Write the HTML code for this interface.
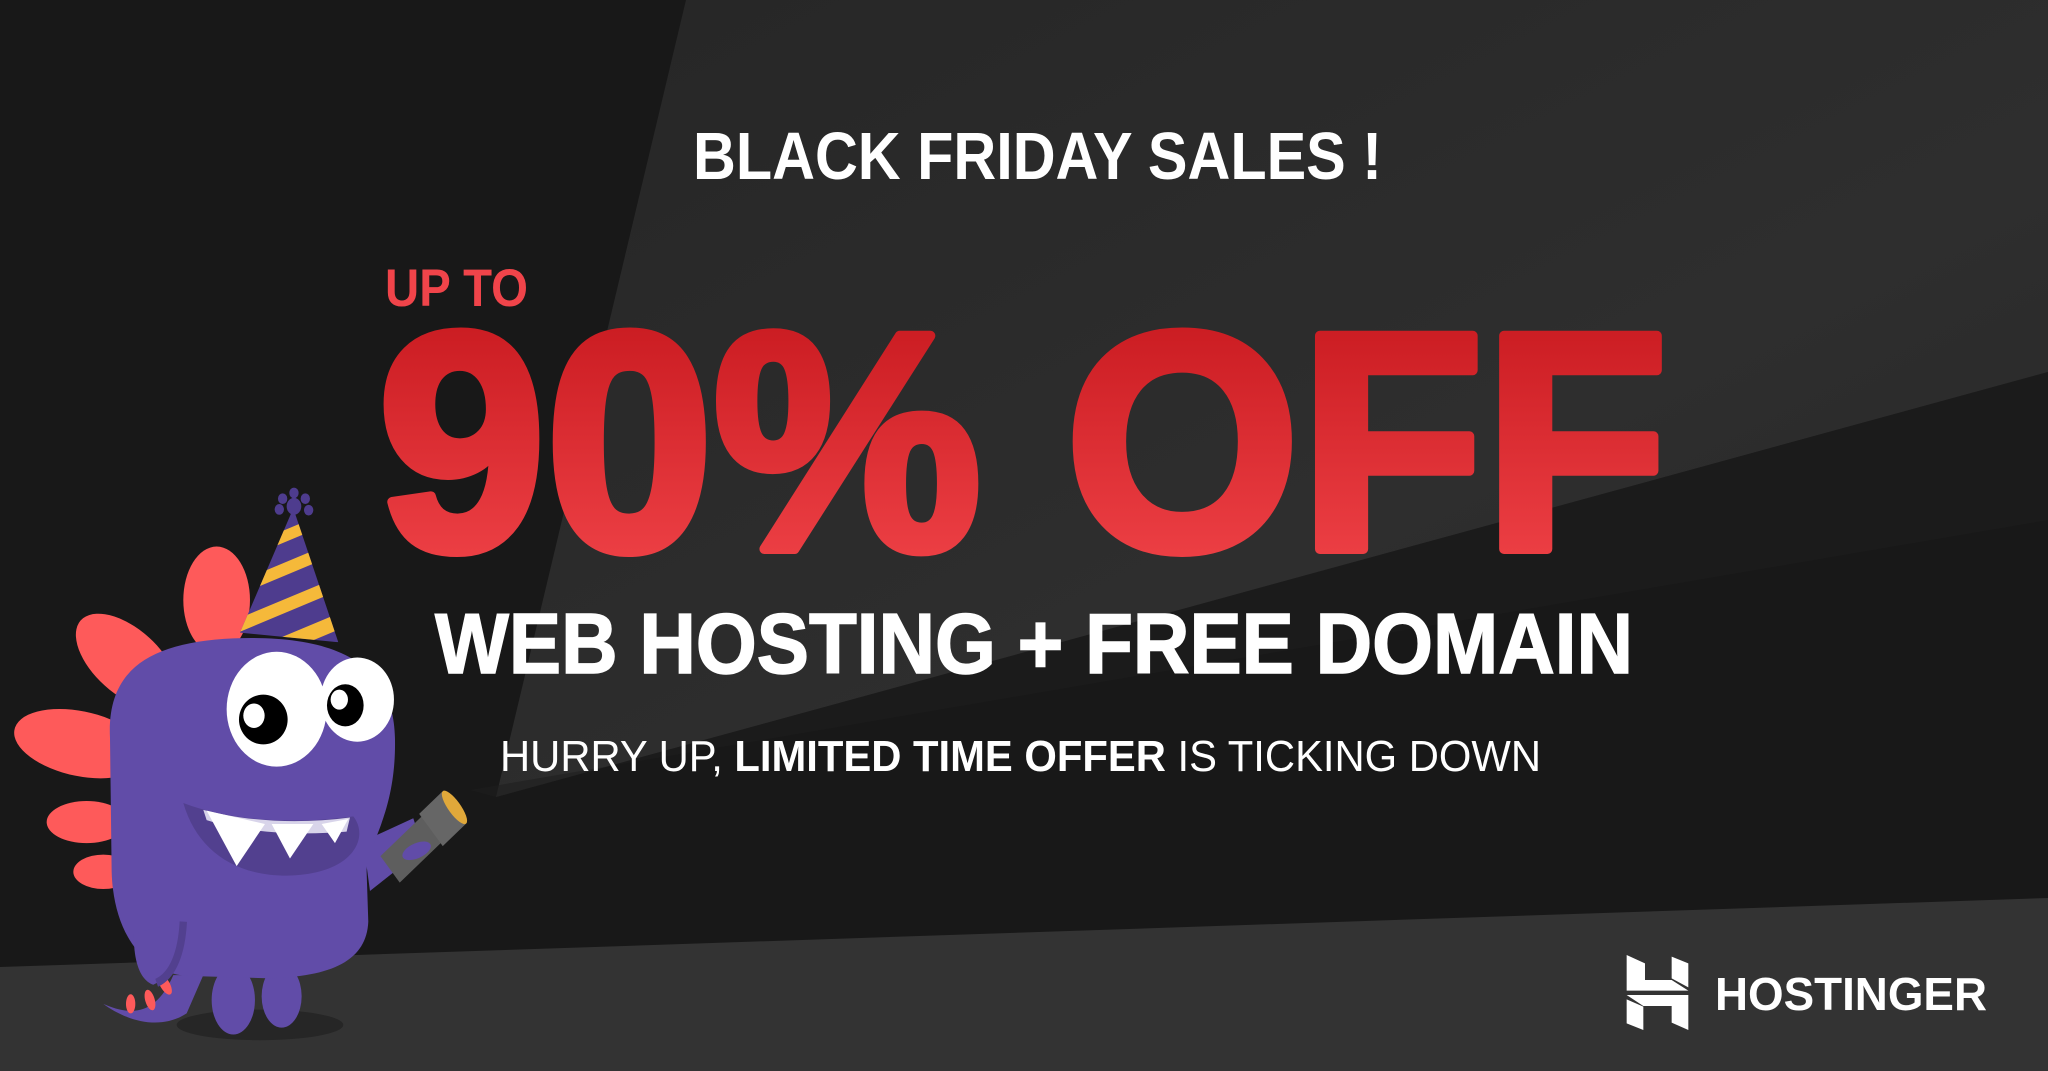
<!DOCTYPE html>
<html><head><meta charset="utf-8"><style>
html,body{margin:0;padding:0;background:#191919;overflow:hidden}
svg{display:block}
text{font-family:"Liberation Sans",sans-serif;font-weight:bold}
</style></head><body>
<svg width="2048" height="1071" viewBox="0 0 2048 1071" xmlns="http://www.w3.org/2000/svg">
<defs>
<linearGradient id="red" x1="0" y1="0" x2="0" y2="1">
<stop offset="0" stop-color="#c3141a"/><stop offset="1" stop-color="#f4474c"/></linearGradient>
<linearGradient id="bg2" x1="0" y1="0" x2="1" y2="1">
<stop offset="0" stop-color="#262626"/><stop offset="0.6" stop-color="#2e2e2e"/><stop offset="1" stop-color="#272727"/></linearGradient>
<clipPath id="hat"><polygon points="720,425 880,100 1015,450"/></clipPath>
</defs>
<rect width="2048" height="1071" fill="#181818"/>
<polygon points="686,0 2048,0 2048,372 496,797" fill="url(#bg2)"/>
<polygon points="496,797 2048,372 2048,520 470,790" fill="#1e1e1e" opacity="0.6"/>
<polygon points="0,967 2048,898 2048,1071 0,1071" fill="#333333"/>

<text x="693" y="179" font-size="67" fill="#fff" textLength="689" lengthAdjust="spacingAndGlyphs">BLACK FRIDAY SALES !</text>
<text x="385" y="306" font-size="53" fill="#f0444a" textLength="143" lengthAdjust="spacingAndGlyphs">UP TO</text>
<text x="378" y="549" font-size="310" fill="url(#red)" stroke="url(#red)" stroke-width="10" stroke-linejoin="round" textLength="1290" lengthAdjust="spacingAndGlyphs">90% OFF</text>
<text x="435" y="673" font-size="85" fill="#fff" stroke="#fff" stroke-width="1.5" textLength="1198" lengthAdjust="spacingAndGlyphs">WEB HOSTING + FREE DOMAIN</text>
<text x="500" y="771" font-size="44" fill="#fff" textLength="1041" lengthAdjust="spacingAndGlyphs"><tspan font-weight="normal">HURRY UP, </tspan>LIMITED TIME OFFER<tspan font-weight="normal"> IS TICKING DOWN</tspan></text>

<g transform="translate(1600,930) scale(0.3333)" fill="#fff">
<polygon points="80,75 135,100 135,150 215,150 265,182 80,182"/>
<polygon points="215,80 265,100 265,172 215,145"/>
<polygon points="80,195 265,195 265,300 215,278 215,228 130,228"/>
<polygon points="80,208 130,230 130,300 80,280"/>
</g>
<text x="1715" y="1010" font-size="46" fill="#fff" textLength="272" lengthAdjust="spacingAndGlyphs">HOSTINGER</text>

<g transform="translate(0,470) scale(0.3333,0.3827)">
<ellipse cx="780" cy="1450" rx="250" ry="40" fill="#262626"/>
<g fill="#fe5a5a">
<ellipse cx="650" cy="340" rx="100" ry="140"/>
<ellipse cx="380" cy="500" rx="175" ry="90" transform="rotate(35 380 500)"/>
<ellipse cx="240" cy="715" rx="200" ry="85" transform="rotate(10 240 715)"/>
<ellipse cx="260" cy="920" rx="120" ry="55"/>
<ellipse cx="310" cy="1050" rx="90" ry="45"/>
</g>
<path d="M310,1395 C380,1440 480,1465 560,1420 L610,1320 L520,1320 C470,1420 400,1430 310,1395 Z" fill="#614ca8"/>
<ellipse cx="392" cy="1395" rx="14" ry="25" fill="#fe5a5a"/>
<ellipse cx="450" cy="1385" rx="14" ry="28" fill="#fe5a5a" transform="rotate(-20 450 1385)"/>
<ellipse cx="495" cy="1345" rx="14" ry="30" fill="#fe5a5a" transform="rotate(-35 495 1345)"/>
<ellipse cx="700" cy="1385" rx="65" ry="90" fill="#614ca8"/>
<ellipse cx="845" cy="1375" rx="60" ry="82" fill="#614ca8"/>
<path d="M1090,970 L1240,910 L1270,990 L1110,1100 Z" fill="#614ca8"/>
<path d="M330,700 C320,520 450,450 700,440 C1000,430 1180,500 1185,700 C1190,900 1100,980 1100,1050 L1105,1180 C1100,1280 1000,1325 800,1328 L560,1322 C420,1312 340,1200 335,1050 Z" fill="#614ca8"/>
<path d="M550,1180 C545,1260 520,1320 460,1345 C410,1330 400,1260 402,1210 Z" fill="#614ca8"/>
<path d="M550,1180 C545,1260 520,1320 470,1340" stroke="#52408f" stroke-width="22" fill="none"/>
<path d="M550,870 C700,920 900,925 1060,905 C1110,960 1060,1058 860,1060 C700,1060 590,990 550,870 Z" fill="#52408f"/>
<path d="M610,888 C750,920 900,925 1050,908 L1040,945 C900,955 750,950 620,915 Z" fill="#d8d4ea"/>
<polygon points="620,890 795,925 710,1035" fill="#fff"/>
<polygon points="815,925 940,925 870,1015" fill="#fff"/>
<polygon points="965,925 1045,912 1005,975" fill="#fff"/>
<ellipse cx="830" cy="625" rx="150" ry="150" fill="#fff"/>
<ellipse cx="1072" cy="600" rx="110" ry="110" fill="#fff"/>
<ellipse cx="790" cy="652" rx="73" ry="65" fill="#000"/>
<circle cx="1036" cy="615" r="55" fill="#000"/>
<circle cx="762" cy="642" r="32" fill="#fff"/>
<circle cx="1018" cy="600" r="26" fill="#fff"/>
<g clip-path="url(#hat)">
<rect x="600" y="80" width="500" height="400" fill="#4e3c8e"/>
<g fill="#f5b93a" transform="rotate(-20 870 300)">
<rect x="600" y="160" width="500" height="30"/>
<rect x="600" y="240" width="500" height="32"/>
<rect x="600" y="330" width="500" height="34"/>
<rect x="600" y="420" width="500" height="40"/>
</g>
</g>
<g fill="#4e3c8e">
<circle cx="882" cy="95" r="22"/>
<circle cx="882" cy="60" r="14"/><circle cx="848" cy="75" r="14"/><circle cx="916" cy="75" r="14"/>
<circle cx="838" cy="103" r="14"/><circle cx="926" cy="105" r="14"/>
</g>
<g transform="rotate(-40 1270 960)">
<rect x="1140" y="915" width="260" height="90" fill="#5e5e5e"/>
<rect x="1300" y="905" width="90" height="110" fill="#666"/>
<ellipse cx="1392" cy="960" rx="18" ry="55" fill="#e0a83a"/>
</g>
<ellipse cx="1250" cy="995" rx="45" ry="20" fill="#614ca8" transform="rotate(-20 1250 995)"/>
</g>
</svg>
</body></html>
